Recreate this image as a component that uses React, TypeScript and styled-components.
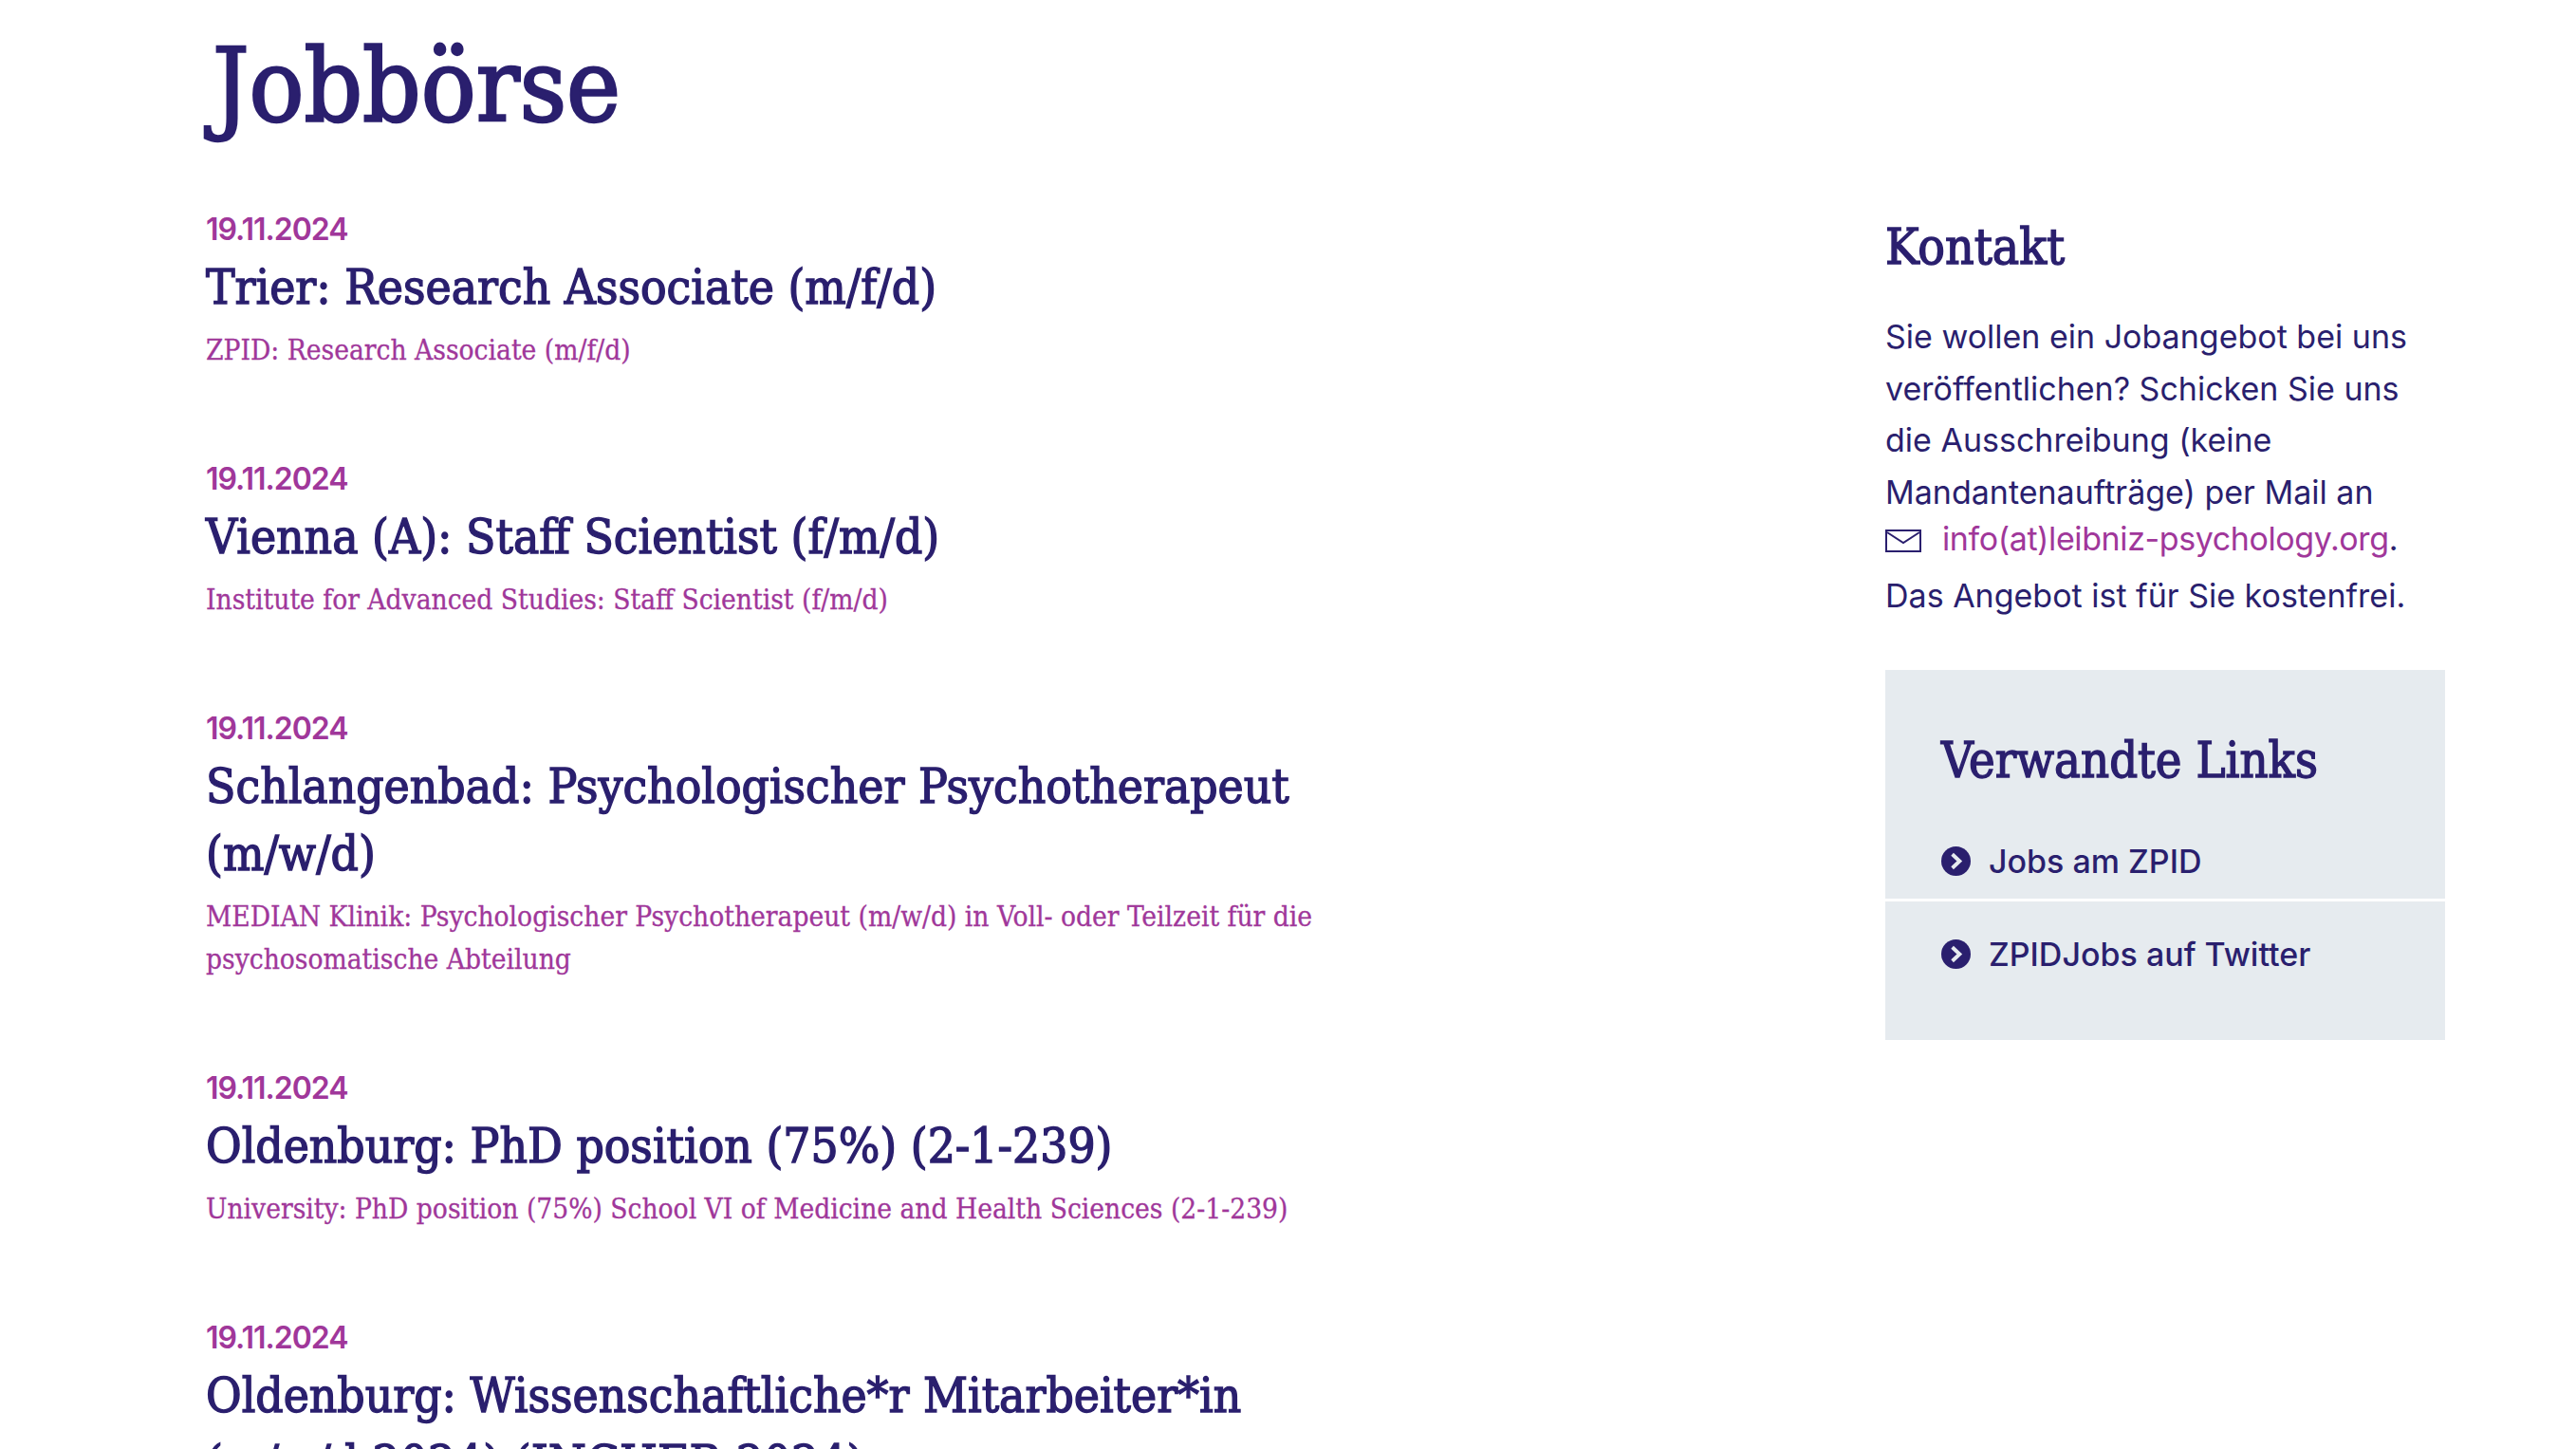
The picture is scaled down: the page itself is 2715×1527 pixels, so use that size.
import * as React from "react";
import styled, { createGlobalStyle } from "styled-components";

const navy = "#2a1f6e";
const purple = "#a0379a";
const slab = `"DejaVu Serif Condensed", "DejaVu Serif", serif`;
const sans = `Inter, "Liberation Sans", sans-serif`;

const jobs = [
  {
    date: "19.11.2024",
    title: "Trier: Research Associate (m/f/d)",
    text: "ZPID: Research Associate (m/f/d)",
  },
  {
    date: "19.11.2024",
    title: "Vienna (A): Staff Scientist (f/m/d)",
    text: "Institute for Advanced Studies: Staff Scientist (f/m/d)",
  },
  {
    date: "19.11.2024",
    title: "Schlangenbad: Psychologischer Psychotherapeut (m/w/d)",
    text: "MEDIAN Klinik: Psychologischer Psychotherapeut (m/w/d) in Voll- oder Teilzeit für die psychosomatische Abteilung",
  },
  {
    date: "19.11.2024",
    title: "Oldenburg: PhD position (75%) (2-1-239)",
    text: "University: PhD position (75%) School VI of Medicine and Health Sciences (2-1-239)",
  },
  {
    date: "19.11.2024",
    title: "Oldenburg: Wissenschaftliche*r Mitarbeiter*in (m/w/d 2024) (INCHER 2024)",
    text: "",
  },
];

const App = () => {
  return (
    <Page>
      <GlobalStyle />
      <PageTitle>Jobbörse</PageTitle>
      <Columns>
        <JobList>
          {jobs.map((job) => (
            <Job key={job.title}>
              <JobDate>{job.date}</JobDate>
              <JobTitle>{job.title}</JobTitle>
              <JobText>{job.text}</JobText>
            </Job>
          ))}
        </JobList>
        <Sidebar>
          <ContactTitle>Kontakt</ContactTitle>
          <ContactText>
            Sie wollen ein Jobangebot bei uns veröffentlichen? Schicken Sie uns die Ausschreibung
            (keine Mandantenaufträge) per Mail an
            <MailLine>
              <MailLink href="#">
                <MailIcon viewBox="0 0 38 24" aria-hidden="true">
                  <rect x="1" y="1" width="36" height="22" fill="none" stroke={navy} strokeWidth="2" />
                  <path d="M2 3 L19 14 L36 3" fill="none" stroke={navy} strokeWidth="2" />
                </MailIcon>
                info(at)leibniz-psychology.org
              </MailLink>
              .
            </MailLine>
            Das Angebot ist für Sie kostenfrei.
          </ContactText>
          <LinksBox>
            <LinksTitle>Verwandte Links</LinksTitle>
            <LinkRow>
              <Bullet />
              <LinkLabel href="#">Jobs am ZPID</LinkLabel>
            </LinkRow>
            <LinkRow>
              <Bullet />
              <LinkLabel href="#">ZPIDJobs auf Twitter</LinkLabel>
            </LinkRow>
          </LinksBox>
        </Sidebar>
      </Columns>
    </Page>
  );
};

const Bullet = () => (
  <BulletIcon viewBox="0 0 32 32" aria-hidden="true">
    <circle cx="16" cy="16" r="16" fill={navy} />
    <path d="M12 8.5 L20 16 L12 23.5" fill="none" stroke="#e6ebef" strokeWidth="4" />
  </BulletIcon>
);

export default App;

const GlobalStyle = createGlobalStyle`
  html, body {
    margin: 0;
    height: 100%;
    overflow: hidden;
    background: #fff;
  }
`;

const Page = styled.div`
  padding: 28px 0 0 217px;
  width: 2360px;
  height: 1499px;
  overflow: hidden;
  color: ${navy};
  font-family: ${sans};
`;

const PageTitle = styled.h1`
  margin: 0 0 70px 7px;
  font-family: ${slab};
  font-weight: 400;
  font-size: 107px;
  line-height: 124px;
  -webkit-text-stroke: 2.5px ${navy};
`;

const Columns = styled.div`
  display: grid;
  grid-template-columns: 1770px 590px;
`;

const JobList = styled.div`
  display: flex;
  flex-direction: column;
  gap: 93px;
  width: 1240px;
`;

const Job = styled.article`
  display: flex;
  flex-direction: column;
`;

const JobDate = styled.div`
  color: ${purple};
  font-size: 32px;
  font-weight: 600;
  line-height: 40px;
  letter-spacing: -1px;
`;

const JobTitle = styled.h2`
  margin: 5px 0 0;
  font-family: ${slab};
  font-size: 51px;
  font-weight: 400;
  line-height: 71px;
  -webkit-text-stroke: 1.4px ${navy};
`;

const JobText = styled.p`
  margin: 9px 0 0;
  color: ${purple};
  font-family: ${slab};
  font-size: 29.6px;
  line-height: 45px;
  -webkit-text-stroke: 0.3px ${purple};
`;

const Sidebar = styled.aside`
  display: flex;
  flex-direction: column;
`;

const ContactTitle = styled.h3`
  margin: 3px 0 33px;
  font-family: ${slab};
  font-size: 53px;
  font-weight: 400;
  line-height: 70px;
  -webkit-text-stroke: 1.4px ${navy};
`;

const ContactText = styled.p`
  margin: 0 0 50px;
  font-size: 34px;
  line-height: 54.6px;
`;

const MailLine = styled.span`
  display: block;
  margin: -5px 0 5px;
`;

const MailLink = styled.a`
  color: ${purple};
  white-space: nowrap;
  letter-spacing: -0.4px;
  text-decoration: none;
`;

const MailIcon = styled.svg`
  width: 38px;
  height: 24px;
  margin-right: 22px;
  vertical-align: -2px;
`;

const LinksBox = styled.div`
  display: flex;
  flex-direction: column;
  height: 390px;
  box-sizing: border-box;
  padding-top: 58px;
  background: #e6ebef;
`;

const LinksTitle = styled.h3`
  margin: 0 0 14px 59px;
  font-family: ${slab};
  font-size: 52px;
  font-weight: 400;
  line-height: 74px;
  -webkit-text-stroke: 1.4px ${navy};
`;

const LinkRow = styled.div`
  display: flex;
  align-items: center;
  gap: 19px;
  box-sizing: border-box;
  height: 95px;
  padding: 17px 0 0 59px;
  & + & {
    height: 98px;
    border-top: 3px solid #fff;
  }
`;

const BulletIcon = styled.svg`
  width: 31px;
  height: 31px;
  flex: none;
`;

const LinkLabel = styled.a`
  color: ${navy};
  font-size: 34px;
  font-weight: 500;
  text-decoration: none;
`;
